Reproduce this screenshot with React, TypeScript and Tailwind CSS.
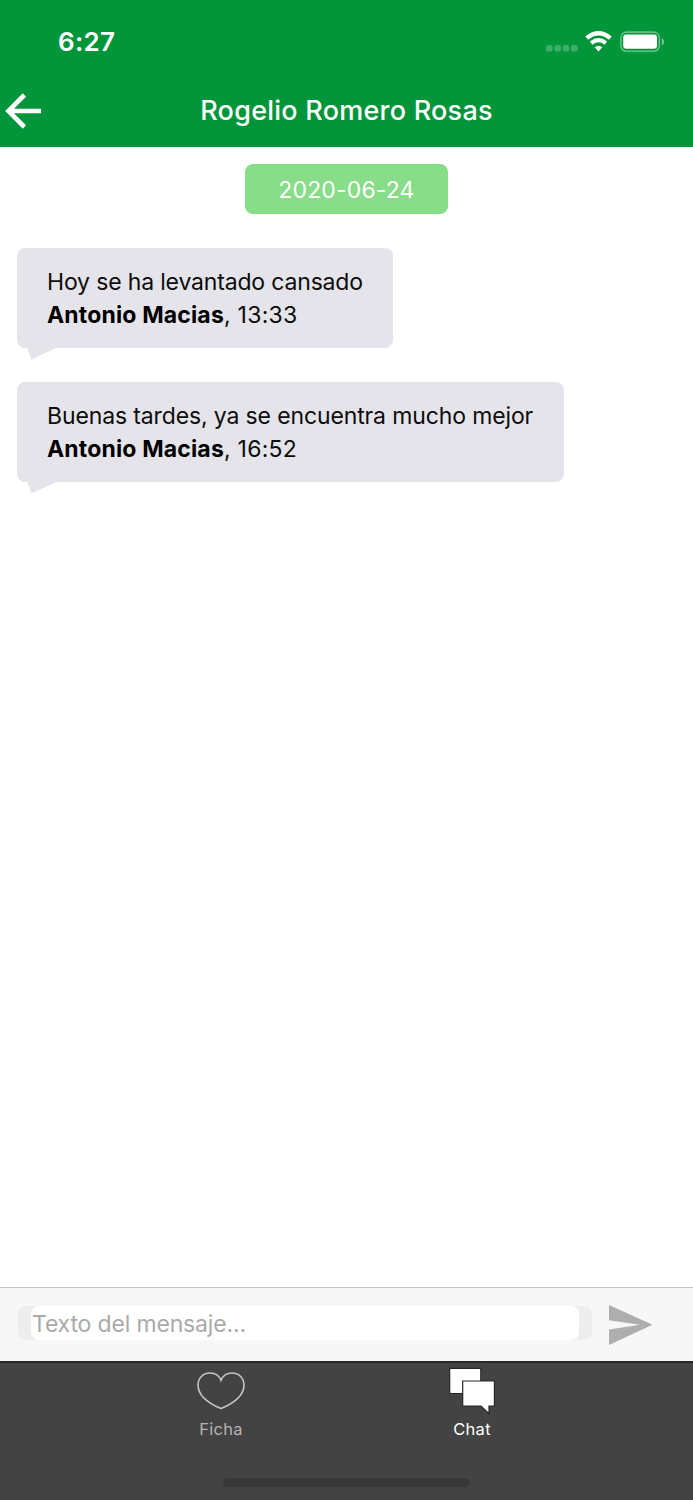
import type { ReactNode } from 'react';

type Message = {
  text: string;
  author: string;
  time: string;
  width: string;
  tracking: string;
};

const messages: Message[] = [
  { text: 'Hoy se ha levantado cansado', author: 'Antonio Macias', time: '13:33', width: 'w-[376px]', tracking: 'tracking-[-0.165px]' },
  { text: 'Buenas tardes, ya se encuentra mucho mejor', author: 'Antonio Macias', time: '16:52', width: 'w-[547px]', tracking: 'tracking-[-0.13px]' },
];

function StatusBar() {
  return (
    <div className="flex h-[74px] items-start justify-between pl-[58px] pr-[28px] pt-[26px] text-white">
      <span className="text-[26px] font-semibold leading-[32px] tracking-[0.3px]">6:27</span>
      <div className="flex h-[32px] items-center">
        <svg className="h-[32px] w-[32px]" viewBox="0 0 32 32" fill="#fff" fillOpacity="0.24">
          <rect x="0" y="19" width="6.6" height="6.6" rx="2.2" />
          <rect x="8.4" y="19" width="6.6" height="6.6" rx="2.2" />
          <rect x="16.7" y="19" width="6.6" height="6.6" rx="2.2" />
          <rect x="25" y="19" width="6.6" height="6.6" rx="2.2" />
        </svg>
        <svg className="ml-[7px] h-[32px] w-[27px]" viewBox="0 0 27 32" fill="none" stroke="#fff">
          <path d="M1.7 12.2 Q13.5 2.4 25.3 12.2" strokeWidth="4.3" />
          <path d="M6.2 17.1 Q13.5 11.2 20.8 17.1" strokeWidth="4" />
          <path d="M9.7 21.3 Q13.5 18 17.3 21.3 L13.5 25.4 Z" fill="#fff" stroke="none" />
        </svg>
        <svg className="ml-[8px] h-[32px] w-[45px]" viewBox="0 0 45 32" fill="none">
          <rect x="0.9" y="6.1" width="38.4" height="19.2" rx="5.6" stroke="#fff" strokeOpacity="0.4" strokeWidth="1.6" />
          <rect x="3.2" y="8.4" width="33.8" height="14.4" rx="3" fill="#fff" />
          <path d="M41.9 12.2 C44.6 13.2 44.6 18.2 41.9 19.2 Z" fill="#fff" fillOpacity="0.5" />
        </svg>
      </div>
    </div>
  );
}

function Header({ title }: { title: string }) {
  return (
    <header className="h-[147px] shrink-0 bg-[#029539]">
      <StatusBar />
      <div className="flex h-[73px] items-center pl-[5px] pr-[41px]">
        <svg className="h-[36px] w-[36px] shrink-0" viewBox="0 0 36 36" fill="none" stroke="#fff" strokeWidth="4.6">
          <path d="M3.6 18H36M19.4 2L3.4 18L19.4 34" />
        </svg>
        <h1 className="flex-1 pt-[2px] text-center text-[27px] font-medium tracking-[0.24px] text-white">{title}</h1>
      </div>
    </header>
  );
}

function Bubble({ message }: { message: Message }) {
  return (
    <div className={`relative h-[100px] rounded-[8px] bg-[#e5e4ea] pl-[30px] pt-[18px] text-[23px] leading-[33.4px] text-[#0c0c0c] ${message.width}`}>
      <p className={`whitespace-nowrap ${message.tracking}`}>{message.text}</p>
      <p className="whitespace-nowrap tracking-[0.27px]">
        <b className="font-bold tracking-[0.16px] text-black">{message.author}</b>, {message.time}
      </p>
      <svg className="absolute left-[10px] top-[99px] h-[13px] w-[32px]" viewBox="0 0 32 13" fill="#e5e4ea">
        <path d="M0 0H31L4.4 12.4Z" />
      </svg>
    </div>
  );
}

function Composer() {
  return (
    <div className="flex h-[74px] shrink-0 border-t border-[#c4c4c4] bg-[#f7f7f7] pl-[18px] pt-[18px]">
      <div className="h-[34px] w-[574px] rounded-[8px] bg-[#ededed] pl-[13px] pr-[13px]">
        <div className="h-full rounded-[8px] bg-white pl-px pt-px text-[23px] leading-[34px] tracking-[-0.16px] text-[#aaaaaa]">
          Texto del mensaje...
        </div>
      </div>
      <svg className="ml-[17px] -mt-px h-[40px] w-[44px]" viewBox="0 0 44 40" fill="#aeaeae">
        <path d="M0 0L43.5 19.8L0 40V24.6L31 19.8L0 15.3Z" />
      </svg>
    </div>
  );
}

function Tab({ label, color, children }: { label: string; color: string; children: ReactNode }) {
  return (
    <div className={`flex w-[251px] flex-col items-center ${color}`}>
      {children}
      <span className="text-[16.5px] leading-[20px] tracking-[0.3px]">{label}</span>
    </div>
  );
}

function TabBar() {
  return (
    <nav className="flex h-[139px] shrink-0 flex-col items-center justify-between border-t-2 border-[#282828] bg-[#434343] pb-[13px]">
      <div className="flex">
        <Tab label="Ficha" color="text-[#b4b4b4]">
          <svg className="h-[56px] w-[50px]" viewBox="0 0 50 56" fill="none" stroke="#c4c4c4" strokeWidth="1.6">
            <path d="M25 17.4C23.2 12.8 19 10 14 10C7 10 2 15.2 2 22C2 33.5 14 41 25 45.6C36 41 48 33.5 48 22C48 15.2 43 10 36 10C31 10 26.8 12.8 25 17.4Z" />
          </svg>
        </Tab>
        <Tab label="Chat" color="text-white">
          <svg className="h-[56px] w-[46px]" viewBox="0 0 46 56" fill="#fff" stroke="#262626" strokeWidth="1.2">
            <path d="M0.7 5.4H31.8V30.5H0.7Z" />
            <path d="M13.7 18H45.4V43H40V50.6L32 43H13.7Z" />
          </svg>
        </Tab>
      </div>
      <div className="h-[9px] w-[247px] rounded-full bg-[#383838]" />
    </nav>
  );
}

export default function App() {
  return (
    <div className="flex h-[1500px] w-[693px] flex-col overflow-hidden bg-white font-[Inter,sans-serif]">
      <Header title="Rogelio Romero Rosas" />
      <main className="flex flex-1 flex-col pl-[17px] pr-[17px] pt-[17px]">
        <div className="mb-[34px] flex h-[50px] w-[203px] items-center justify-center self-center rounded-[8px] bg-[#88dd89] pt-[2px] text-[23px] tracking-[0.15px] text-white">
          2020-06-24
        </div>
        <div className="flex flex-col gap-[34px]">
          {messages.map(message => (
            <Bubble key={message.time} message={message} />
          ))}
        </div>
      </main>
      <Composer />
      <TabBar />
    </div>
  );
}
